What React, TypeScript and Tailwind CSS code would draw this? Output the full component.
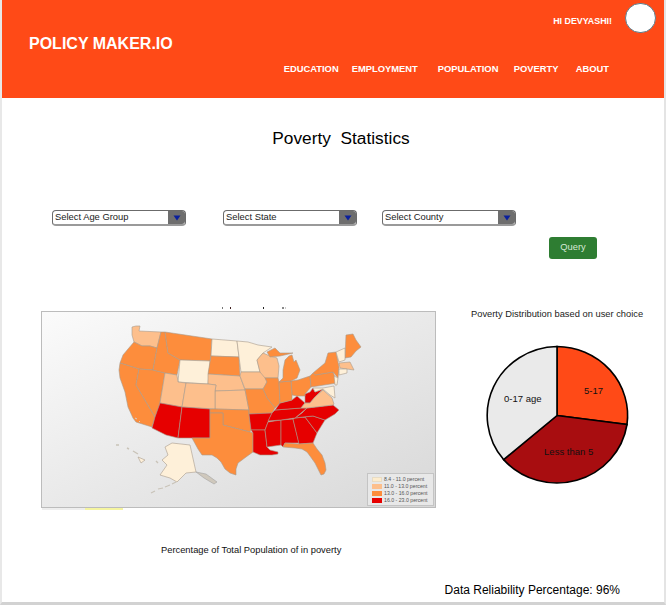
const navItems = [
  { label: 'EDUCATION', className: 'w-[68px]' },
  { label: 'EMPLOYMENT', className: 'w-[86px]' },
  { label: 'POPULATION', className: 'w-[76px]' },
  { label: 'POVERTY', className: 'w-[62px]' },
  { label: 'ABOUT', className: 'w-auto' },
]

const LIGHT = '#fef0d9'
const PALE = '#fdbf8c'
const ORANGE = '#fd8d3c'
const RED = '#e60000'

const states: [string, string][] = [
  [PALE, '132,327 136,326 140,326 139,331 161,332 157,348 150,346 142,346 134,342 132,335'],
  [ORANGE, '134,342 142,346 150,346 157,348 153,370 139,369 120,363 123,355 128,349'],
  [ORANGE, '120,363 139,369 136,385 155,417 152,427 136,422 133,418 128,407 125,392 120,378 119,370'],
  [ORANGE, '139,369 153,370 165,373 160,403 155,417 136,385'],
  [ORANGE, '161,332 165,332 168,353 180,360 177,375 165,373 153,370 157,348'],
  [ORANGE, '165,332 212,339 211,356 210,361 180,360 168,353'],
  [LIGHT, '180,360 210,361 208,384 178,382'],
  [LIGHT, '212,339 237,341 239,357 211,356'],
  [ORANGE, '211,356 239,357 240,376 208,374'],
  [PALE, '208,374 240,376 245,390 215,391 216,385 208,384'],
  [PALE, '215,391 245,390 249,410 215,409'],
  [PALE, '165,373 177,375 178,382 186,383 182,407 160,403'],
  [PALE, '186,383 208,384 216,385 215,391 215,409 182,407'],
  [RED, '160,403 182,407 178,438 166,435 152,428 155,417'],
  [RED, '182,407 210,409 210,438 178,438'],
  [ORANGE, '210,409 215,409 249,410 249,414 251,430 250,432 223,425 223,413 210,413'],
  [ORANGE, '210,413 223,413 223,425 250,432 253,433 253,452 246,457 238,463 236,469 236,475 230,473 225,469 221,462 217,458 212,455 208,455 202,455 198,449 192,438 210,438'],
  [LIGHT, '237,341 248,342 258,345 272,347 263,353 257,360 260,372 241,372 239,357'],
  [PALE, '241,372 260,372 263,373 267,382 263,389 245,389 240,376'],
  [PALE, '257,360 263,353 270,356 277,358 279,366 278,378 265,378 260,372'],
  [ORANGE, '265,378 278,378 279,382 280,403 275,408 267,398 263,389 267,382'],
  [ORANGE, '245,389 263,389 267,398 275,408 272,413 249,414 249,410'],
  [RED, '249,414 272,413 268,422 265,430 251,430'],
  [RED, '251,430 265,430 266,438 267,447 270,450 278,452 278,454 272,455 267,455 260,455 253,452 253,433'],
  [RED, '268,422 281,420 281,445 267,447 266,438 265,430'],
  [RED, '281,420 293,419 299,443 285,443 283,447 281,445'],
  [RED, '293,419 295,418 305,417 317,433 313,443 299,444'],
  [RED, '303,417 313,416 325,420 317,433 305,417'],
  [RED, '295,418 302,413 307,408 333,405 339,410 335,414 325,420 313,416 303,417'],
  [RED, '268,421 272,413 275,410 301,408 307,408 295,418 281,420'],
  [RED, '275,410 280,403 292,400 297,396 305,403 301,408'],
  [RED, '305,403 305,394 310,392 313,388 315,392 323,389 315,397 310,403'],
  [PALE, '301,408 305,403 310,403 315,397 323,390 332,398 334,404 333,405 307,408'],
  [ORANGE, '291,381 298,380 310,376 311,387 305,394 305,396 297,396 292,395'],
  [ORANGE, '279,382 291,381 292,395 292,400 280,403'],
  [ORANGE, '283,378 283,370 285,360 289,356 292,355 294,362 296,360 300,370 297,378 291,381 279,382'],
  [ORANGE, '267,352 275,348 280,353 293,353 280,356 270,357'],
  [ORANGE, '310,376 313,373 315,375 333,372 337,383 311,387'],
  [ORANGE, '313,373 325,363 328,353 336,352 339,367 338,378 333,372 315,375'],
  [ORANGE, '346,335 353,334 356,340 361,347 356,351 351,357 345,358'],
  [LIGHT, '336,352 345,348 345,360 339,362'],
  [PALE, '339,363 350,362 354,370 340,368'],
  [LIGHT, '339,369 347,369 347,373 339,375'],
  [LIGHT, '334,376 338,378 337,385 335,385'],
  [LIGHT, '313,388 323,388 334,386 335,398 330,395 323,389 315,392'],
  [ORANGE, '283,447 285,443 299,444 313,443 317,449 322,455 325,463 326,470 324,474 321,475 318,469 315,463 310,456 307,452 302,449 295,448'],
  [LIGHT, '165,447 172,443 190,445 196,472 186,473 177,482 170,478 160,475 167,465 162,460 168,455'],
  [LIGHT, '138,457 145,460 141,463'],
]

const legend = [
  { color: 'bg-[#fdeccd] border border-[#e8dcc4]', label: '8.4 - 11.0 percent' },
  { color: 'bg-[#fdbf8c]', label: '11.0 - 13.0 percent' },
  { color: 'bg-[#fd8d3c]', label: '13.0 - 16.0 percent' },
  { color: 'bg-[#e60000]', label: '16.0 - 23.0 percent' },
]

function Select({ label }: { label: string }) {
  return (
    <div className="flex h-4 w-[134px] items-center justify-between rounded-[4px] border border-b-2 border-[#6b6b6b] border-b-[#9a9a9a] bg-white pl-[2px] text-[9.4px] text-[#222]">
      <span>{label}</span>
      <span className="flex h-full w-[17px] items-center justify-center rounded-r-[3px] bg-[#6e6e6e]">
        <svg width="8" height="6" viewBox="0 0 8 6">
          <path d="M0.5 0.5h7L4 5.5z" fill="#0a1f9c" />
        </svg>
      </span>
    </div>
  )
}

function UsMap() {
  return (
    <svg viewBox="41 311 395 197" className="h-[197px] w-[395px] blur-[0.4px]">
      {states.map(([fill, points], i) => (
        <polygon key={i} points={points} fill={fill} stroke="#a89a8c" strokeWidth="0.6" strokeLinejoin="round" />
      ))}
      <polygon points="196,472 206,474 217,482 214,484 204,478" fill="#cfc8bc" stroke="#999" strokeWidth="0.5" />
      <path d="M176 482l-4 2M170 485l-5 2M163 488l-5 1M155 491l-4 2" fill="none" stroke="#c9c3b8" strokeWidth="1.2" />
      <path d="M116 445h3M127 448l2 1M133 451l5 3M156 461l2 2" stroke="#c9c3b8" strokeWidth="1.4" />
      <path d="M135 418l2 1M139 421l1 1" stroke="#d0d0d0" strokeWidth="1" />
    </svg>
  )
}

function PieChart() {
  return (
    <svg width="142" height="139" viewBox="0 0 142 139" className="overflow-visible">
      <path d="M71 69.5V0.5A71 69 0 0 1 141 78.5Z" fill="#ff4a17" stroke="#000" strokeWidth="1.6" />
      <path d="M71 69.5L141 78.5A71 69 0 0 1 17.6 113.6Z" fill="#a80d10" stroke="#000" strokeWidth="1.6" />
      <path d="M71 69.5L17.6 113.6A71 69 0 0 1 71 0.5Z" fill="#eaeaea" stroke="#000" strokeWidth="1.6" />
    </svg>
  )
}

export default function App() {
  return (
    <div className="flex h-[605px] w-[666px] flex-col overflow-hidden border-r-2 border-b-[3px] border-l-2 border-r-[#e4e4e4] border-b-[#d2d2d2] border-l-[#e8e8e8] bg-white font-['Liberation_Sans',Arial,sans-serif]">
      <header className="-mx-0.5 h-[98px] shrink-0 bg-[#ff4a17] pt-[3px] pr-[10px] text-white">
        <div className="flex items-start justify-end gap-[13px]">
          <span className="mt-[12px] text-[8.9px] font-bold">HI DEVYASHI!</span>
          <span className="h-[30px] w-[31px] rounded-full border border-[#5e7d8c] bg-white" />
        </div>
        <div className="flex items-start justify-between pr-[47px] pl-[29px]">
          <span className="-mt-[1px] text-base font-bold">POLICY MAKER.IO</span>
          <nav className="mt-[29px] flex text-[9.4px] font-bold">
            {navItems.map((item) => (
              <span key={item.label} className={item.className}>
                {item.label}
              </span>
            ))}
          </nav>
        </div>
      </header>

      <main className="flex flex-1 flex-col">
        <h1 className="mt-[30px] pl-4 text-center text-[17.3px] leading-5 text-black">Poverty&nbsp; Statistics</h1>

        <div className="mt-[62px] flex pl-[50px]">
          <Select label="Select Age Group" />
          <div className="ml-[37px]">
            <Select label="Select State" />
          </div>
          <div className="ml-[25px]">
            <Select label="Select County" />
          </div>
        </div>

        <div className="mt-[11px] flex justify-end pr-[67px]">
          <button className="h-[22px] w-[48px] rounded-[3px] bg-[#2e7d32] text-[9.33px] text-[#d5e8d5]">Query</button>
        </div>

        <div className="mt-[48px] flex items-start">
          <div className="ml-[39px] flex w-[395px] flex-col">
            <div className="mb-[2px] ml-[181px] flex h-[2px]">
              <span className="w-px bg-[#777]" />
              <span className="ml-[7px] w-px bg-[#402020]" />
              <span className="ml-[32px] w-px bg-[#222]" />
              <span className="ml-[18px] w-[2px] bg-[#888]" />
              <span className="ml-px w-px bg-[#ccc]" />
            </div>
            <div className="relative h-[197px] bg-gradient-to-br from-[#fbfbfb] to-[#d8d8d8] outline outline-[#bcbcbc] -outline-offset-1">
              <UsMap />
              <div className="absolute right-[2px] bottom-[2px] flex w-[67px] flex-col gap-px border border-[#c4c4c4] bg-[#e8e8e8] px-[4px] py-[2px]">
                {legend.map((row) => (
                  <div key={row.label} className="flex items-center gap-[2px]">
                    <span className={`h-[5px] w-[10px] shrink-0 ${row.color}`} />
                    <span className="text-[5.2px] leading-[6px] whitespace-nowrap text-[#555]">{row.label}</span>
                  </div>
                ))}
              </div>
            </div>
            <div className="flex h-[2px]">
              <span className="ml-px w-[43px] bg-[#eeeeee]" />
              <span className="w-[38px] bg-[#f5f5a0]" />
            </div>
            <p className="mt-[34px] ml-[120px] text-[9.33px] whitespace-nowrap text-[#111]">
              Percentage of Total Population of in poverty
            </p>
          </div>

          <div className="ml-[35px] flex flex-col items-center">
            <p className="mt-px text-[9.33px] whitespace-nowrap text-[#222]">Poverty Distribution based on user choice</p>
            <div className="relative mt-[24px] text-[9.5px] text-[#111]">
              <PieChart />
              <span className="absolute top-[46px] left-[18px]">0-17 age</span>
              <span className="absolute top-[38px] left-[98px]">5-17</span>
              <span className="absolute top-[99px] left-[58px]">Less than 5</span>
            </div>
          </div>
        </div>

        <p className="mt-auto mb-[4px] pr-[44px] text-right text-xs text-black">Data Reliability Percentage: 96%</p>
      </main>
    </div>
  )
}
